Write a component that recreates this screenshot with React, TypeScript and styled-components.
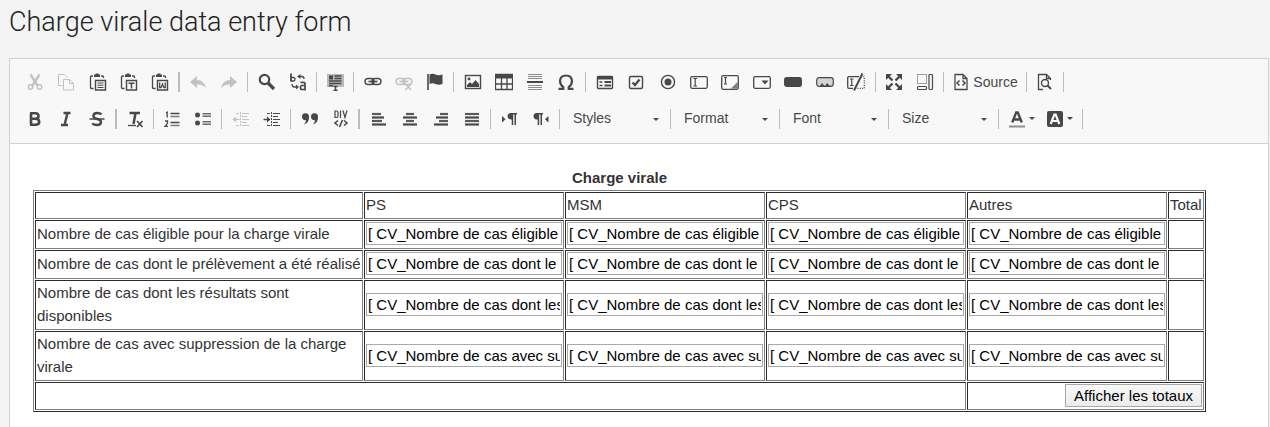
import React from 'react';
import styled, { createGlobalStyle, css } from 'styled-components';

const GlobalStyle = createGlobalStyle`
  body {
    margin: 0;
    background: #f3f3f3;
    color: #333;
    font-family: 'Liberation Sans', Arial, sans-serif;
    font-size: 15px;
    line-height: 23px;
  }
`;

const Page = styled.main`
  display: flex;
  flex-direction: column;
  box-sizing: border-box;
  min-height: 100vh;
  padding: 4px 1px 0 9px;
`;

const Title = styled.h1`
  margin: 0 0 18px;
  font: 300 27px/36px Roboto, sans-serif;
  color: #222;
`;

const Editor = styled.section`
  flex: 1;
  border: 1px solid #d1d1d1;
  border-bottom: 0;
  background: #fff;
`;

const Toolbar = styled.div`
  display: flex;
  flex-direction: column;
  padding: 4px 6px 6px;
  background: #f8f8f8;
  border-bottom: 1px solid #d1d1d1;
`;

const ToolbarRow = styled.div`
  display: flex;
  height: 37px;
`;

const Group = styled.div<{ $width: number; $thick?: boolean }>`
  display: flex;
  align-items: center;
  flex: none;
  box-sizing: border-box;
  width: ${(p) => p.$width}px;
  padding-left: 3px;

  &::after {
    content: '';
    width: ${(p) => (p.$thick ? 2 : 1)}px;
    height: 20px;
    margin-left: ${(p) => (p.$thick ? 2 : 3)}px;
    background: #bcbcbc;
  }
`;

const ToolButton = styled.button`
  display: flex;
  flex: 1 1 0;
  align-items: center;
  justify-content: center;
  gap: 3px;
  min-width: 0;
  height: 30px;
  padding: 0;
  border: 0;
  background: none;
  color: #484848;
  font: 14px/20px 'Liberation Sans', Arial, sans-serif;

  &:disabled {
    color: #484848;
    opacity: 0.3;
  }
`;

const Glyph = styled.svg`
  flex: none;
  width: 18px;
  height: 18px;
  fill: none;
  stroke: currentColor;
`;

const Combo = styled.label`
  display: grid;
  flex: 1;
  align-items: center;
  margin-left: 10px;
  > * {
    grid-area: 1 / 1;
  }
`;

const ComboSelect = styled.select`
  appearance: none;
  width: 100%;
  height: 28px;
  padding: 0 0 2px;
  border: 0;
  background: none;
  color: #484848;
  font: 14px/20px 'Liberation Sans', Arial, sans-serif;
`;

const Caret = styled.span<{ $inset?: boolean }>`
  justify-self: end;
  width: 0;
  border: 3px solid transparent;
  border-top-color: #484848;
  border-bottom: 0;
  pointer-events: none;
  ${(p) =>
    p.$inset &&
    css`
      margin-right: 8px;
      margin-top: 2px;
    `}
`;

const Content = styled.div`
  padding: 22px 62px 15px 23px;
`;

const DataTable = styled.table`
  width: 100%;
  border: 1px solid;
  border-color: #808080 #2c2c2c #2c2c2c #808080;
  border-spacing: 1px;
`;

const Caption = styled.caption`
  padding-bottom: 1px;
  font-weight: bold;
`;

const cell = css`
  padding: 1px;
  border: 1px solid;
  border-color: #2c2c2c #808080 #808080 #2c2c2c;
  font-weight: normal;
  text-align: left;
  vertical-align: middle;
`;

const HeadCell = styled.th<{ $width?: number }>`
  ${cell}
  box-sizing: border-box;
  width: ${(p) => (p.$width ? `${p.$width}px` : 'auto')};
  padding: 0 0 2px 1px;
`;

const Cell = styled.td`
  ${cell}
`;

const Entry = styled.input`
  display: block;
  box-sizing: border-box;
  width: 196px;
  height: 23px;
  margin: 0 0 2px;
  padding: 1px;
  border: 1px solid #a9a9a9;
  background: #fff;
  color: #000;
  font: 15px/19px 'Liberation Sans', Arial, sans-serif;
`;

const TotalsButton = styled.button`
  display: block;
  box-sizing: border-box;
  height: 23px;
  margin: 0 0 1px auto;
  padding: 0 8px;
  border: 1px solid #a9a9a9;
  background: linear-gradient(#f8f8f8, #ececec);
  color: #000;
  font: 15px/19px 'Liberation Sans', Arial, sans-serif;
`;

const clipboard = (
  <>
    <path d="M4 3H2.500Q1.500 3 1.500 4V14.500Q1.500 15.500 2.500 15.500H4.500M12 3h1.500Q14.500 3 14.500 4V5" strokeWidth="1.300" />
    <path d="M5 1.500h6v2.500H5zM6.500 .5h3v2h-3z" fill="currentColor" stroke="none" />
    <path d="M6.500 7.500h10v9.500h-10z" strokeWidth="1.400" />
  </>
);

const link = (
  <>
    <rect x="1" y="5.500" width="9" height="6" rx="3" strokeWidth="1.400" />
    <rect x="8" y="5.500" width="9" height="6" rx="3" strokeWidth="1.400" />
    <path d="M4.500 8.500h9" strokeWidth="1.600" />
  </>
);

const lines = (rows: [number, number][]) => (
  <>
    {rows.map(([x, w], i) => (
      <path key={i} d={`M${x} ${4 + i * 3.5}h${w}`} strokeWidth="2.200" opacity={i % 2 ? 1 : 0.9} />
    ))}
  </>
);

const indentLines = (
  <>
    <path d="M8.500 2v15" strokeDasharray="2 1" />
    <path d="M10 3.500h7M10 6.500h5M10 9.500h7M10 12.500h5M10 15.500h7M4 3.500h3M4 15.500h3" />
  </>
);

const pilcrow = 'M7 3h7v1.500h-1V15h-1.500V4.500h-1.300V15H8.700V9.500H8Q4.500 9 4.500 6.200T7.500 3z';

const glyphs: Record<string, React.ReactNode> = {
  cut: (
    <>
      <path d="M4.500 1.500l7 11M13.500 1.500l-7 11" strokeWidth="2.400" />
      <circle cx="4.500" cy="14" r="2.200" strokeWidth="1.400" />
      <circle cx="13.500" cy="14" r="2.200" strokeWidth="1.400" />
    </>
  ),
  copy: (
    <>
      <path d="M5.500 12.500H1.500V1.500h6l3 3" />
      <path d="M6.500 6.500h6l4 4v6.500h-10zM12.500 6.500v4h4" />
    </>
  ),
  paste: (
    <>
      {clipboard}
      <path d="M8.500 10h6M8.500 12.200h6M8.500 14.500h6" />
    </>
  ),
  pasteText: (
    <>
      {clipboard}
      <path d="M8.500 10.200h6M11.500 10v5.500" strokeWidth="1.500" />
    </>
  ),
  pasteWord: (
    <>
      {clipboard}
      <path d="M8.700 9.500v5h1.300l1.500-3 1.500 3h1.300v-5M11.500 10v3" strokeWidth="1.300" />
    </>
  ),
  undo: <path d="M1 9l7-6v4q7 0 9 8-3-4-9-3.500V15z" fill="currentColor" stroke="none" />,
  redo: <path d="M17 9l-7-6v4q-7 0-9 8 3-4 9-3.500V15z" fill="currentColor" stroke="none" />,
  find: (
    <>
      <circle cx="6.500" cy="6.500" r="4.700" strokeWidth="2.200" />
      <path d="M10 10l6 6" strokeWidth="3.200" />
    </>
  ),
  replace: (
    <>
      <path d="M2 .5v8" strokeWidth="1.800" />
      <path d="M2 4.500h2.500q1.500 0 1.500 1.700t-1.500 1.800H2" strokeWidth="1.300" />
      <path d="M11.500 9.300h3q1.500 0 1.500 1.500v6.700M16 12.500h-3q-1.500 0-1.500 2t1.500 2h3" strokeWidth="1.700" />
      <path d="M10 3.500h3q2 0 2 2.500M3 11q0 3 2.500 3H8" strokeWidth="1.300" />
      <path d="M8 3.500L11.500 1v5zM10 14l-3-2.500v5z" fill="currentColor" stroke="none" />
    </>
  ),
  selectAll: (
    <>
      <path d="M1 1h17v13H1z" fill="currentColor" stroke="none" opacity=".35" />
      <path d="M3 2.500h4v4H3z" fill="currentColor" stroke="none" />
      <path d="M8.500 3h7M8.500 5.500h7M3 8h12.500M3 10.500h12.500M3 12.800h4" strokeWidth="1.400" />
      <path d="M7.500 13.500h4M9.500 13.500v4M7.500 17.300h4" strokeWidth="1.400" />
    </>
  ),
  link,
  unlink: (
    <>
      {link}
      <path d="M10.500 11l5.500 6M16 11l-5.500 6" strokeWidth="1.500" />
    </>
  ),
  anchor: (
    <>
      <path d="M2 1v16" strokeWidth="1.600" />
      <path d="M3.500 1.500q3-1.500 6 0t7 0v9.500q-4 1.500-7 0t-6 0z" fill="currentColor" stroke="none" />
    </>
  ),
  image: (
    <>
      <rect x="1.500" y="2.500" width="15" height="13" strokeWidth="1.400" />
      <circle cx="5" cy="6" r="1.400" fill="currentColor" stroke="none" />
      <path d="M3 14v-2l3-3 2 2 3.500-4L15 11v3z" fill="currentColor" stroke="none" />
    </>
  ),
  table: (
    <>
      <path d="M.5 1.500h17v15H.5zM6.500 5v11M12 5v11M1 11h16" strokeWidth="1.300" />
      <path d="M0 1h18v4.500H0z" fill="currentColor" stroke="none" />
    </>
  ),
  rule: (
    <>
      <path d="M2 1.500h14M2 3.500h14M2 5.500h14M2 12.500h14M2 14.500h14M2 16.500h14" opacity=".6" />
      <path d="M1 9h16" strokeWidth="2" />
    </>
  ),
  omega: <path d="M1.500 15.800h4.800v-1.600Q3 11.500 3 7.800 3.500 2.500 9 2.500t6 5.300q0 3.700-3.300 6.400v1.600h4.800" strokeWidth="2.200" />,
  form: (
    <>
      <rect x="1.500" y="3.500" width="15" height="12" rx="1" strokeWidth="1.400" />
      <path d="M1 3h16v3.500H1z" fill="currentColor" stroke="none" />
      <path d="M3.500 9h3M3.500 12.500h3" strokeWidth="1.400" />
      <path d="M8.500 9h6.500M8.500 12.500h6.500" strokeWidth="2" />
    </>
  ),
  checkbox: (
    <>
      <rect x="2.500" y="3.500" width="13" height="12" rx="1.500" strokeWidth="1.400" />
      <path d="M5.500 9.500l2.500 2.500 4.500-5.500" strokeWidth="2.200" />
    </>
  ),
  radio: (
    <>
      <circle cx="9" cy="9" r="6.600" strokeWidth="1.400" />
      <circle cx="9" cy="9" r="3.500" fill="currentColor" stroke="none" />
    </>
  ),
  textField: (
    <>
      <rect x=".7" y="3.700" width="16.600" height="11.600" rx="1.500" strokeWidth="1.300" />
      <path d="M3.500 5.500h3.500M5.200 5.500v7.500M3.500 13h3.500" strokeWidth="1.200" />
    </>
  ),
  textarea: (
    <>
      <rect x=".7" y="2.700" width="16.600" height="13.600" rx="1.500" strokeWidth="1.300" />
      <path d="M3 4.500h3M4.500 4.500v6.500M3 11h3" strokeWidth="1.200" />
      <path d="M16.500 9v6.500H10z" fill="currentColor" stroke="none" opacity=".7" />
    </>
  ),
  selectField: (
    <>
      <rect x=".7" y="3.700" width="16.600" height="11.600" rx="1.500" strokeWidth="1.300" />
      <path d="M8.500 7.500h7l-3.500 4z" fill="currentColor" stroke="none" />
    </>
  ),
  button: <rect x=".7" y="4.700" width="16.600" height="8.600" rx="2" fill="currentColor" strokeWidth="1.300" />,
  imageButton: (
    <>
      <rect x=".7" y="4.700" width="16.600" height="8.600" rx="2.500" fill="#d4d4d4" strokeWidth="1.200" />
      <path d="M4 13l2-3 2 2.500L9 13l2-3 1.500 1.500L14 13z" fill="currentColor" stroke="none" />
    </>
  ),
  hidden: (
    <>
      <path d="M12 3.700H2Q.7 3.700 .7 5v9q0 1.300 1.300 1.300h4" strokeWidth="1.300" />
      <path d="M14 3.700h3.300v11.600H9" strokeWidth="1.300" strokeDasharray="1 1.300" />
      <path d="M3 6h3.500M4.700 6v6.500M3 12.500h3.500" strokeWidth="1.200" />
      <path d="M15.500 .5L7 17.500" strokeWidth="1.900" />
    </>
  ),
  maximize: (
    <>
      <path d="M3 3l4.500 4.500M15 3l-4.500 4.500M3 15l4.500-4.500M15 15l-4.500-4.500" strokeWidth="2.400" />
      <path d="M1 1h6L1 7zM17 1v6l-6-6zM1 17v-6l6 6zM17 17h-6l6-6z" fill="currentColor" stroke="none" />
    </>
  ),
  blocks: (
    <>
      <rect x="1.500" y="1.500" width="9" height="9" strokeDasharray="1 1" />
      <rect x="1.500" y="13.500" width="9" height="3" rx="1" strokeWidth="1.200" />
      <rect x="13" y="1.500" width="3.500" height="15" rx="1" strokeWidth="1.200" />
    </>
  ),
  source: (
    <>
      <path d="M3 1.500h8l4 4v11H3zM11 1.500v4h4" strokeWidth="1.300" />
      <path d="M7.500 7.500L5 10l2.500 2.500M10.500 7.500L13 10l-2.500 2.500" strokeWidth="1.500" />
    </>
  ),
  preview: (
    <>
      <path d="M7 16.500H2.500v-15h8l4 4V7M10.500 1.500v4h4" strokeWidth="1.300" />
      <circle cx="9" cy="10" r="3.500" strokeWidth="1.400" />
      <path d="M11.500 12.500l3.500 3.500" strokeWidth="2" />
    </>
  ),
  bold: <path d="M5 3.200v11.600M4 3.300h5.500q3 0 3 2.600T9.500 8.700H5M9.500 8.700q3.700 0 3.700 3t-3.700 3H4" strokeWidth="2.600" />,
  italic: <path d="M6.500 3h7M4 15h7M10.500 3l-3 12" strokeWidth="2.400" />,
  strike: (
    <>
      <path d="M13.500 4.500Q12 3 9.200 3 5.500 3 5.500 6q0 2.300 3.700 3t3.800 3q0 3-4 3-3 0-4.800-1.600" strokeWidth="2.400" />
      <path d="M1.500 9h15" strokeWidth="1.500" />
    </>
  ),
  clear: (
    <>
      <path d="M3.500 3h10.500M9.500 3l-2 11" strokeWidth="2.500" />
      <path d="M2 15.500h8" strokeWidth="1.300" />
      <path d="M11 11l5.500 6M16.500 11L11 17" strokeWidth="1.700" />
    </>
  ),
  numbered: (
    <>
      <path d="M3 3l1.200-.8V7.500M2 11h2.500v2.300L2 16.300h3" strokeWidth="1.300" />
      <path d="M7.500 3.500h9M7.500 12.500h9" strokeWidth="1.300" />
      <path d="M7.500 6.500h9M7.500 15.500h9" strokeWidth="1.300" opacity=".7" />
    </>
  ),
  bulleted: (
    <>
      <circle cx="3.500" cy="5" r="2.500" fill="currentColor" stroke="none" />
      <circle cx="3.500" cy="13" r="2.500" fill="currentColor" stroke="none" />
      <path d="M8.500 3.700h8.500M8.500 6.200h8.500M8.500 11.700h8.500M8.500 14.200h8.500" strokeWidth="1.400" opacity=".8" />
    </>
  ),
  outdent: (
    <>
      {indentLines}
      <path d="M2 9.500h5.500" strokeWidth="1.300" />
      <path d="M.5 9.500l3.500-3v6z" fill="currentColor" stroke="none" />
    </>
  ),
  indent: (
    <>
      {indentLines}
      <path d="M.5 9.500h5" strokeWidth="1.500" />
      <path d="M7.500 9.500L4 6.500v6z" fill="currentColor" stroke="none" />
    </>
  ),
  quote: (
    <path
      d="M1 7a3.400 3.400 0 0 1 7-.5Q8.500 12.500 3 14.500q2-2 2-4.300Q1.300 10.200 1 7zM10 7a3.400 3.400 0 0 1 7-.5q.5 6-5 8 2-2 2-4.300-3.700 0-4-3.200z"
      fill="currentColor"
      stroke="none"
    />
  ),
  div: (
    <>
      <path d="M3 1v6.500h1.500q1.500 0 1.500-1.500V2.500Q6 1 4.500 1zM8.500 .5v7.500M11 .5l2 7 2-7" strokeWidth="1.200" />
      <path d="M6 10.500L3 13l3 2.500M12 10.500l3 2.500-3 2.500M10.500 10l-3 7" strokeWidth="1.600" />
    </>
  ),
  left: lines([[2, 9], [2, 12], [2, 10], [2, 14]]),
  center: lines([[5, 8], [2, 14], [5, 8], [2, 14]]),
  right: lines([[8, 8], [4, 12], [7, 9], [2, 14]]),
  justify: lines([[2, 14], [2, 14], [2, 14], [2, 14]]),
  ltr: (
    <>
      <path d={pilcrow} fill="currentColor" stroke="none" transform="translate(2 0)" />
      <path d="M1 6l3.500 3.200L1 12.500z" fill="currentColor" stroke="none" />
    </>
  ),
  rtl: (
    <>
      <path d={pilcrow} fill="currentColor" stroke="none" transform="translate(-3 0)" />
      <path d="M16.500 6L13 9.200l3.500 3.300z" fill="currentColor" stroke="none" />
    </>
  ),
  textColor: (
    <>
      <path d="M4.200 12.500L8.200 2.500h1.600l4 10M5.500 9.500h7" strokeWidth="2.300" />
      <path d="M1 16.500h16" strokeWidth="2" opacity=".6" />
    </>
  ),
  bgColor: (
    <>
      <rect x="1" y="1" width="16" height="16" rx="2" fill="currentColor" stroke="none" />
      <path d="M4.700 14L8.300 4.500h1.400L13.300 14M6 11h6" stroke="#f8f8f8" strokeWidth="2.200" />
    </>
  ),
};

type Tool = { icon: string; label: string; off?: boolean; text?: string; menu?: boolean };
type ToolGroup = { width: number; thick?: boolean; tools?: Tool[]; combo?: string };

const t = (icon: string, label: string, extra: Partial<Tool> = {}): Tool => ({ icon, label, ...extra });

const rows: ToolGroup[][] = [
  [
    {
      width: 164,
      thick: true,
      tools: [
        t('cut', 'Cut', { off: true }),
        t('copy', 'Copy', { off: true }),
        t('paste', 'Paste'),
        t('pasteText', 'Paste as plain text'),
        t('pasteWord', 'Paste from Word'),
      ],
    },
    { width: 68, tools: [t('undo', 'Undo', { off: true }), t('redo', 'Redo', { off: true })] },
    { width: 69, tools: [t('find', 'Find'), t('replace', 'Replace')] },
    { width: 37, tools: [t('selectAll', 'Select All')] },
    { width: 100, tools: [t('link', 'Link'), t('unlink', 'Unlink', { off: true }), t('anchor', 'Anchor')] },
    {
      width: 132,
      tools: [
        t('image', 'Image'),
        t('table', 'Table'),
        t('rule', 'Insert Horizontal Line'),
        t('omega', 'Insert Special Character'),
      ],
    },
    {
      width: 290,
      tools: [
        t('form', 'Form'),
        t('checkbox', 'Checkbox'),
        t('radio', 'Radio Button'),
        t('textField', 'Text Field'),
        t('textarea', 'Textarea'),
        t('selectField', 'Selection Field'),
        t('button', 'Button'),
        t('imageButton', 'Image Button'),
        t('hidden', 'Hidden Field'),
      ],
    },
    { width: 68, tools: [t('maximize', 'Maximize'), t('blocks', 'Show Blocks')] },
    { width: 83, tools: [t('source', 'Source', { text: 'Source' })] },
    { width: 37, tools: [t('preview', 'Preview')] },
  ],
  [
    { width: 101, thick: true, tools: [t('bold', 'Bold'), t('italic', 'Italic'), t('strike', 'Strikethrough')] },
    { width: 37, tools: [t('clear', 'Remove Format')] },
    { width: 68, tools: [t('numbered', 'Numbered List'), t('bulleted', 'Bulleted List')] },
    { width: 69, tools: [t('outdent', 'Decrease Indent', { off: true }), t('indent', 'Increase Indent')] },
    { width: 69, thick: true, tools: [t('quote', 'Block Quote'), t('div', 'Create Div Container')] },
    {
      width: 131,
      tools: [t('left', 'Align Left'), t('center', 'Center'), t('right', 'Align Right'), t('justify', 'Justify')],
    },
    { width: 69, tools: [t('ltr', 'Text direction left to right'), t('rtl', 'Text direction right to left')] },
    { width: 111, combo: 'Styles' },
    { width: 109, combo: 'Format' },
    { width: 109, combo: 'Font' },
    { width: 110, combo: 'Size' },
    {
      width: 84,
      tools: [t('textColor', 'Text Color', { menu: true }), t('bgColor', 'Background Color', { menu: true })],
    },
  ],
];

const columns = ['PS', 'MSM', 'CPS', 'Autres'];
const indicators = [
  'Nombre de cas éligible pour la charge virale',
  'Nombre de cas dont le prélèvement a été réalisé',
  'Nombre de cas dont les résultats sont disponibles',
  'Nombre de cas avec suppression de la charge virale',
];

function ToolbarGroup({ group }: { group: ToolGroup }) {
  return (
    <Group $width={group.width} $thick={group.thick}>
      {group.tools?.map((tool) => (
        <ToolButton key={tool.icon} type="button" aria-label={tool.label} disabled={tool.off}>
          <Glyph viewBox="0 0 18 18" aria-hidden="true">
            {glyphs[tool.icon]}
          </Glyph>
          {tool.text}
          {tool.menu && <Caret />}
        </ToolButton>
      ))}
      {group.combo && (
        <Combo>
          <ComboSelect aria-label={group.combo}>
            <option>{group.combo}</option>
          </ComboSelect>
          <Caret $inset />
        </Combo>
      )}
    </Group>
  );
}

export default function App() {
  return (
    <Page>
      <GlobalStyle />
      <Title>Charge virale data entry form</Title>
      <Editor>
        <Toolbar role="toolbar" aria-label="Editor">
          {rows.map((groups, i) => (
            <ToolbarRow key={i}>
              {groups.map((group, j) => (
                <ToolbarGroup key={j} group={group} />
              ))}
            </ToolbarRow>
          ))}
        </Toolbar>
        <Content>
          <DataTable>
            <Caption>Charge virale</Caption>
            <thead>
              <tr>
                <HeadCell />
                {columns.map((name) => (
                  <HeadCell key={name} scope="col" $width={200}>
                    {name}
                  </HeadCell>
                ))}
                <HeadCell scope="col" $width={36}>
                  Total
                </HeadCell>
              </tr>
            </thead>
            <tbody>
              {indicators.map((name) => (
                <tr key={name}>
                  <HeadCell scope="row">{name}</HeadCell>
                  {columns.map((column) => (
                    <Cell key={column}>
                      <Entry aria-label={`${name}, ${column}`} defaultValue={`[ CV_${name} ${column} ]`} />
                    </Cell>
                  ))}
                  <Cell />
                </tr>
              ))}
              <tr>
                <Cell colSpan={4} />
                <Cell colSpan={2}>
                  <TotalsButton type="button">Afficher les totaux</TotalsButton>
                </Cell>
              </tr>
            </tbody>
          </DataTable>
        </Content>
      </Editor>
    </Page>
  );
}
